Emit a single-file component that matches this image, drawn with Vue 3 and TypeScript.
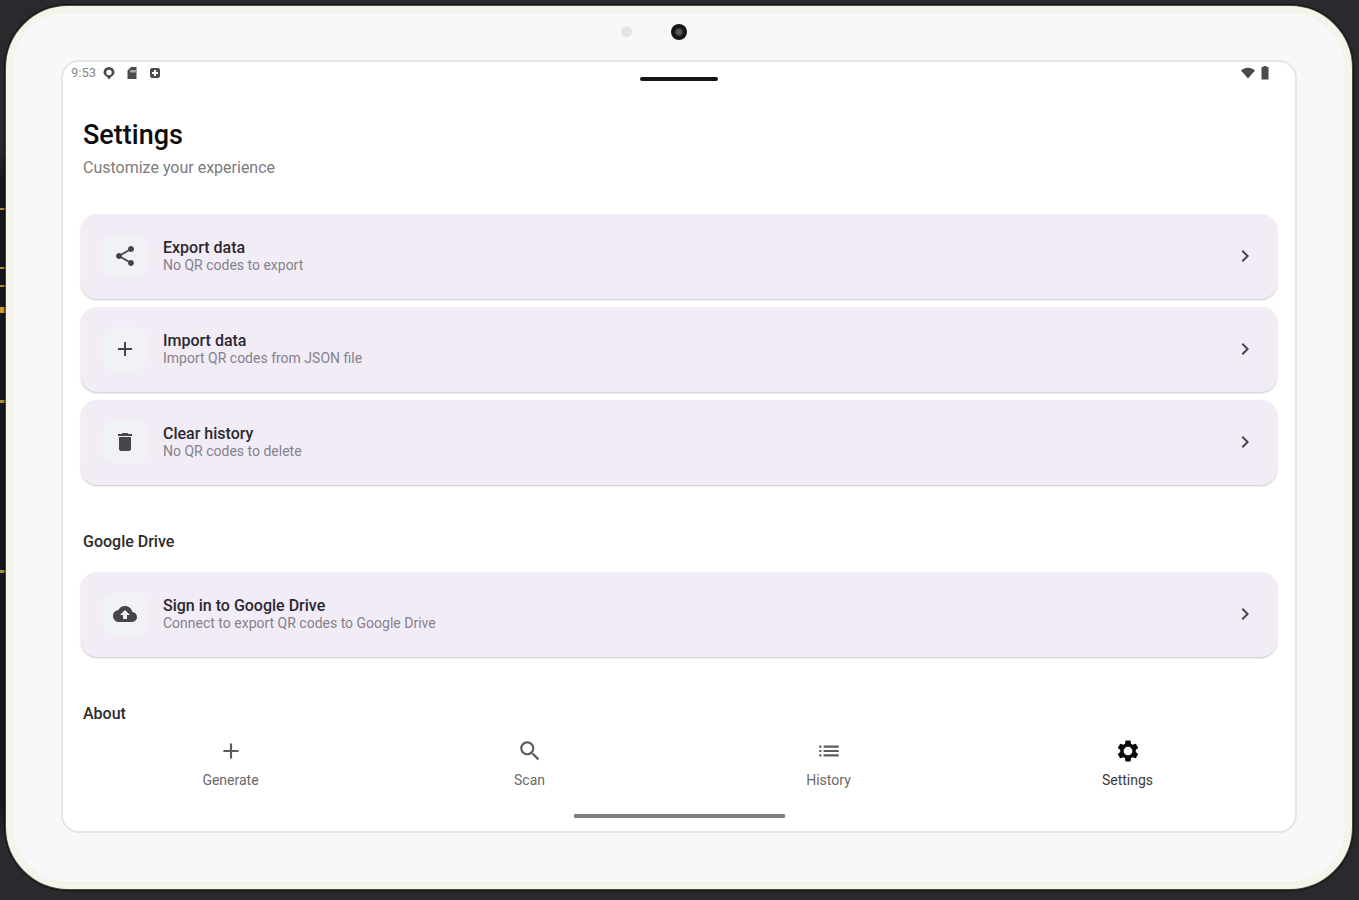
<script setup lang="ts">
import { ref } from 'vue'

interface Row {
  title: string
  note: string
  icon: string
}

interface Tab {
  label: string
  icon: string
}

const icons: Record<string, string> = {
  share:
    'M18 16.08c-.76 0-1.44.3-1.96.77L8.91 12.7c.05-.23.09-.46.09-.7s-.04-.47-.09-.7l7.05-4.11c.54.5 1.25.81 2.04.81 1.66 0 3-1.34 3-3s-1.34-3-3-3-3 1.34-3 3c0 .24.04.47.09.7L8.04 9.81C7.5 9.31 6.79 9 6 9c-1.66 0-3 1.34-3 3s1.34 3 3 3c.79 0 1.5-.31 2.04-.81l7.12 4.16c-.05.21-.08.43-.08.65 0 1.61 1.31 2.92 2.92 2.92s2.92-1.31 2.92-2.92-1.31-2.92-2.92-2.92z',
  add: 'M19 13h-6v6h-2v-6H5v-2h6V5h2v6h6v2z',
  trash: 'M6 19c0 1.1.9 2 2 2h8c1.1 0 2-.9 2-2V7H6v12zM19 4h-3.5l-1-1h-5l-1 1H5v2h14V4z',
  cloud:
    'M19.35 10.04C18.67 6.59 15.64 4 12 4 9.11 4 6.6 5.64 5.35 8.04 2.34 8.36 0 10.91 0 14c0 3.31 2.69 6 6 6h13c2.76 0 5-2.24 5-5 0-2.64-2.05-4.78-4.65-4.96zM14 13v4h-4v-4H7l5-5 5 5h-3z',
  chevron: 'M10 6 8.59 7.41 13.17 12l-4.58 4.59L10 18l6-6z',
  search:
    'M15.5 14h-.79l-.28-.27C15.41 12.59 16 11.11 16 9.5 16 5.91 13.09 3 9.5 3S3 5.91 3 9.5 5.91 16 9.5 16c1.61 0 3.09-.59 4.23-1.57l.27.28v.79l5 4.99L20.49 19l-4.99-5zm-6 0C7.01 14 5 11.99 5 9.5S7.01 5 9.5 5 14 7.01 14 9.5 11.99 14 9.5 14z',
  list: 'M3 13h2v-2H3v2zm0 4h2v-2H3v2zm0-8h2V7H3v2zm4 4h14v-2H7v2zm0 4h14v-2H7v2zM7 7v2h14V7H7z',
  gear:
    'M19.14 12.94c.04-.3.06-.61.06-.94 0-.32-.02-.64-.07-.94l2.03-1.58c.18-.14.23-.41.12-.61l-1.92-3.32c-.12-.22-.37-.29-.59-.22l-2.39.96c-.5-.38-1.03-.7-1.62-.94l-.36-2.54c-.04-.24-.24-.41-.48-.41h-3.84c-.24 0-.43.17-.47.41l-.36 2.54c-.59.24-1.13.57-1.62.94l-2.39-.96c-.22-.08-.47 0-.59.22L2.74 8.87c-.12.21-.08.47.12.61l2.03 1.58c-.05.3-.09.63-.09.94s.02.64.07.94l-2.03 1.58c-.18.14-.23.41-.12.61l1.92 3.32c.12.22.37.29.59.22l2.39-.96c.5.38 1.03.7 1.62.94l.36 2.54c.05.24.24.41.48.41h3.84c.24 0 .44-.17.47-.41l.36-2.54c.59-.24 1.13-.56 1.62-.94l2.39.96c.22.08.47 0 .59-.22l1.92-3.32c.12-.22.07-.47-.12-.61l-2.01-1.58zM12 16c-2.2 0-4-1.8-4-4s1.8-4 4-4 4 1.8 4 4-1.8 4-4 4z',
}

const dataRows: Row[] = [
  { title: 'Export data', note: 'No QR codes to export', icon: 'share' },
  { title: 'Import data', note: 'Import QR codes from JSON file', icon: 'add' },
  { title: 'Clear history', note: 'No QR codes to delete', icon: 'trash' },
]

const driveRows: Row[] = [
  { title: 'Sign in to Google Drive', note: 'Connect to export QR codes to Google Drive', icon: 'cloud' },
]

const tabs: Tab[] = [
  { label: 'Generate', icon: 'add' },
  { label: 'Scan', icon: 'search' },
  { label: 'History', icon: 'list' },
  { label: 'Settings', icon: 'gear' },
]

const activeTab = ref('Settings')
</script>

<template>
  <div class="desk">
    <div class="tablet">
      <div class="bezel">
        <span class="sensor"></span>
        <span class="camera"></span>
      </div>

      <div class="screen">
        <div class="status">
          <div class="status-side">
            <span class="clock">9:53</span>
            <svg class="status-icon" viewBox="0 0 14 14" aria-hidden="true">
              <path fill-rule="evenodd" d="M7 1a5.500 5.500 0 0 0-5.500 5.500c0 2.500 2.500 3.500 3.500 4.500l2 2.500 2-2.500c1-1 3.500-2 3.500-4.500A5.500 5.500 0 0 0 7 1zm0 2.800a2.700 2.700 0 1 1 0 5.400 2.700 2.700 0 0 1 0-5.400z" />
            </svg>
            <svg class="status-icon" viewBox="0 0 14 14" aria-hidden="true">
              <path fill-rule="evenodd" d="M6 1h5.500v12h-9V4.500zM5.500 4v2.500h1V4zm2 0v2.500h1V4zm2 0v2.500h1V4z" />
            </svg>
            <svg class="status-icon" viewBox="0 0 14 14" aria-hidden="true">
              <path fill-rule="evenodd" d="M3.500 2h7L12 3.500v7L10.500 12h-7L2 10.500v-7zM6 4v2H4v2h2v2h2V8h2V6H8V4z" />
            </svg>
          </div>
          <div class="status-side">
            <svg class="status-icon" viewBox="0 0 14 14" aria-hidden="true">
              <path d="M0 4.500C4 .7 10 .7 14 4.500L7 12.500z" />
            </svg>
            <svg class="battery" viewBox="0 0 8 14" aria-hidden="true">
              <path d="M2.500 0h3v1H7.500v12.500h-7V1h2z" />
            </svg>
          </div>
          <span class="handle"></span>
        </div>

        <main class="content">
          <h1>Settings</h1>
          <p class="lead">Customize your experience</p>

          <div class="cards">
            <button v-for="row in dataRows" :key="row.title" type="button" class="card">
              <span class="tile">
                <svg viewBox="0 0 24 24" aria-hidden="true"><path :d="icons[row.icon]" /></svg>
              </span>
              <span class="words">
                <span class="title">{{ row.title }}</span>
                <span class="note">{{ row.note }}</span>
              </span>
              <svg class="chevron" viewBox="0 0 24 24" aria-hidden="true"><path :d="icons.chevron" /></svg>
            </button>
          </div>

          <h2>Google Drive</h2>
          <div class="cards">
            <button v-for="row in driveRows" :key="row.title" type="button" class="card">
              <span class="tile">
                <svg viewBox="0 0 24 24" aria-hidden="true"><path :d="icons[row.icon]" /></svg>
              </span>
              <span class="words">
                <span class="title">{{ row.title }}</span>
                <span class="note">{{ row.note }}</span>
              </span>
              <svg class="chevron" viewBox="0 0 24 24" aria-hidden="true"><path :d="icons.chevron" /></svg>
            </button>
          </div>

          <h2>About</h2>
        </main>

        <nav class="tabs">
          <button
            v-for="tab in tabs"
            :key="tab.label"
            type="button"
            class="tab"
            :class="{ active: tab.label === activeTab }"
            @click="activeTab = tab.label"
          >
            <svg viewBox="0 0 24 24" aria-hidden="true"><path :d="icons[tab.icon]" /></svg>
            <span>{{ tab.label }}</span>
          </button>
        </nav>
        <div class="gesture"></div>
      </div>
    </div>
  </div>
</template>

<style>
body {
  margin: 0;
  background: #292a2e;
}
</style>

<style scoped>
* {
  box-sizing: border-box;
}

.desk {
  display: flex;
  min-height: 100vh;
  padding: 6px 7px 11px 6px;
  font-family: Roboto, 'Liberation Sans', sans-serif;
  background-color: #292a2e;
  background-image: linear-gradient(
    transparent 150px,
    #17171f 180px 208px,
    #b18b35 208px 210px,
    #17171f 210px 267px,
    #b18b35 267px 269px,
    #17171f 269px 285px,
    #b18b35 285px 287px,
    #17171f 287px 307px,
    #d09a2c 307px 313px,
    #17171f 313px 400px,
    #b18b35 400px 403px,
    #17171f 403px 570px,
    #b18b35 570px 573px,
    #17171f 573px 800px,
    transparent 840px
  );
  background-repeat: no-repeat;
  background-size: 6px 100%;
}

.tablet {
  flex: 1;
  display: flex;
  flex-direction: column;
  padding: 0 49px 50px;
  border: 6px solid #f5f4ea;
  border-radius: 62px;
  background: #f8f8f8;
  box-shadow: inset 0 0 0 1px #f1f0e6, 0 0 0 1px rgba(120, 118, 96, 0.6), 0 0 1px 2px rgba(0, 0, 0, 0.6);
}

.bezel {
  display: flex;
  align-items: center;
  justify-content: center;
  height: 48px;
  padding-bottom: 9px;
}

.camera {
  width: 16px;
  height: 16px;
  border-radius: 50%;
  background: radial-gradient(circle, #5c5c5c 0 2px, #151515 5px);
}

.sensor {
  width: 11px;
  height: 11px;
  margin-right: 39px;
  margin-left: -50px;
  border-radius: 50%;
  background: #e3e3e3;
}

.screen {
  flex: 1;
  display: flex;
  flex-direction: column;
  border: 2px solid #e6e6e6;
  border-radius: 18px;
  background: #fff;
}

.status {
  position: relative;
  display: flex;
  align-items: center;
  justify-content: space-between;
  height: 24px;
  padding: 0 26px 2px 8px;
}

.status-side {
  display: flex;
  align-items: center;
  gap: 9px;
}

.status-side:last-of-type {
  gap: 6px;
}

.clock {
  margin-right: -3px;
  font-size: 13px;
  line-height: 16px;
  color: #8a8a8a;
}

.status-icon {
  width: 14px;
  height: 14px;
  fill: #4a4a4a;
}

.battery {
  width: 8px;
  height: 14px;
  fill: #4a4a4a;
}

.handle {
  position: absolute;
  top: 15px;
  left: 50%;
  width: 78px;
  height: 4px;
  margin-left: -39px;
  border-radius: 2px;
  background: #161616;
}

.content {
  flex: 1;
  padding: 32px 18px 0;
}

h1 {
  margin: 0;
  padding-left: 2px;
  font-size: 27px;
  font-weight: 500;
  line-height: 34px;
  color: #0c0c0c;
}

.lead {
  margin: 6px 0 36px;
  padding-left: 2px;
  font-size: 16px;
  line-height: 20px;
  color: #7b7b7b;
}

.cards {
  display: flex;
  flex-direction: column;
  gap: 8px;
}

.card {
  display: flex;
  align-items: center;
  width: 100%;
  min-height: 85px;
  padding: 0 20px 1px 22px;
  border: 0;
  border-radius: 16px;
  background: #f2ecf7;
  box-shadow: 0 1px 2px rgba(0, 0, 0, 0.22);
  font-family: inherit;
  text-align: left;
  cursor: pointer;
}

.tile {
  display: flex;
  align-items: center;
  justify-content: center;
  width: 44px;
  height: 44px;
  margin-right: 16px;
  border-radius: 12px;
  background: #f1f2f5;
}

.tile svg,
.chevron {
  width: 24px;
  height: 24px;
  fill: #45454a;
}

.words {
  flex: 1;
  display: flex;
  flex-direction: column;
}

.title {
  font-size: 16px;
  font-weight: 500;
  line-height: 18px;
  color: #2b292f;
}

.note {
  font-size: 14px;
  line-height: 16px;
  color: #85818a;
}

h2 {
  margin: 47px 0 20px;
  padding-left: 2px;
  font-size: 16px;
  font-weight: 500;
  line-height: 20px;
  color: #2b2b2b;
}

h2:last-child {
  margin-bottom: 0;
}

.tabs {
  display: grid;
  grid-template-columns: repeat(4, 1fr);
  padding: 0 18px;
}

.tab {
  display: flex;
  flex-direction: column;
  align-items: center;
  gap: 8px;
  padding: 0;
  border: 0;
  background: none;
  font-family: inherit;
  font-size: 14px;
  font-weight: 400;
  line-height: 16px;
  color: #6a6a6a;
  cursor: pointer;
}

.tab svg {
  width: 26px;
  height: 26px;
  fill: #5c5c5c;
}

.tab.active {
  color: #3a3a3a;
}

.tab.active svg {
  fill: #0a0a0a;
}

.gesture {
  align-self: center;
  width: 211px;
  height: 4px;
  margin: 26px 0 13px;
  border-radius: 1px;
  background: #808080;
}
</style>
